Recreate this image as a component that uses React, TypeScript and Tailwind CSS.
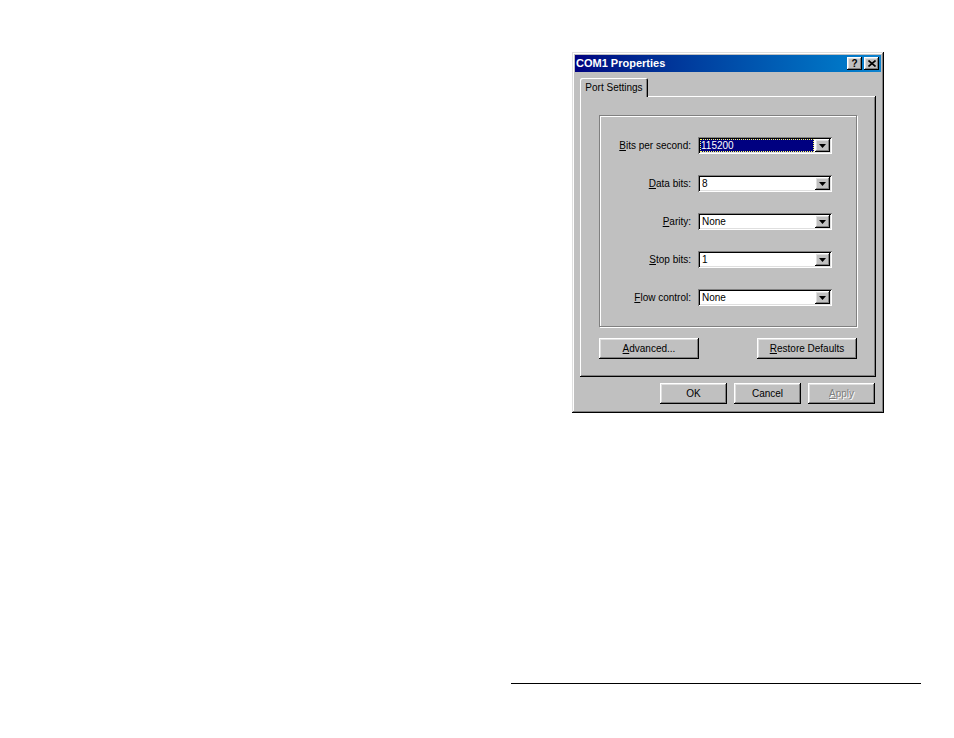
import React from 'react';

const raised =
  'shadow-[inset_-1px_-1px_0_#000,inset_1px_1px_0_#fff,inset_-2px_-2px_0_#808080,inset_2px_2px_0_#dfdfdf]';
const sunken =
  'shadow-[inset_1px_1px_0_#808080,inset_-1px_-1px_0_#fff,inset_2px_2px_0_#000,inset_-2px_-2px_0_#dfdfdf]';

const DropButton = () => (
  <div className={`flex w-[15px] items-center justify-center bg-[#c0c0c0] ${raised}`}>
    <svg width="7" height="4" viewBox="0 0 7 4">
      <polygon points="0,0 7,0 3.5,4" fill="#000" />
    </svg>
  </div>
);

interface ComboProps {
  value: string;
  focused?: boolean;
}

const Combo: React.FC<ComboProps> = ({ value, focused }) => (
  <div className={`flex h-[17px] w-[134px] bg-white p-[2px] ${sunken}`}>
    <div className="flex flex-1 items-center pr-[1px]">
      {focused ? (
        <span className="flex h-full w-full items-center bg-[#000080] pl-[1px] text-white outline-1 outline-dotted outline-[#ffff60] -outline-offset-1">
          {value}
        </span>
      ) : (
        <span className="pl-[2px] text-black">{value}</span>
      )}
    </div>
    <DropButton />
  </div>
);

interface RowProps {
  mnemonic: string;
  rest: string;
  value: string;
  focused?: boolean;
}

const Row: React.FC<RowProps> = ({ mnemonic, rest, value, focused }) => (
  <div className="flex h-[17px] items-center">
    <div className="w-[93px] pr-[2px] text-right text-black">
      <u className="underline-offset-1">{mnemonic}</u>
      {rest}
    </div>
    <div className="ml-[5px]">
      <Combo value={value} focused={focused} />
    </div>
  </div>
);

interface BtnProps {
  label: string;
  mnemonic?: string;
  width: string;
  disabled?: boolean;
}

const Btn: React.FC<BtnProps> = ({ label, mnemonic, width, disabled }) => {
  const first = mnemonic ? label.slice(0, 1) : '';
  const rest = mnemonic ? label.slice(1) : label;
  return (
    <div
      className={`flex h-[21px] items-center justify-center bg-[#c0c0c0] ${width} ${raised} ${
        disabled ? 'text-[#808080] [text-shadow:1px_1px_0_#fff]' : 'text-black'
      }`}
    >
      <span>
        {first && <u className="underline-offset-1">{first}</u>}
        {rest}
      </span>
    </div>
  );
};

export default function App() {
  return (
    <div className="min-h-[738px] w-[954px] bg-white pt-[52px] font-['Liberation_Sans',Arial,sans-serif] text-[10px]">
      <div className="ml-[572px] flex h-[361px] w-[312px] flex-col bg-[#c0c0c0] p-[3px] shadow-[inset_-1px_-1px_0_#000,inset_1px_1px_0_#dfdfdf,inset_-2px_-2px_0_#808080,inset_2px_2px_0_#fff]">
        {/* title bar */}
        <div className="flex h-[17px] items-center justify-between bg-gradient-to-r from-[#000080] to-[#1084d0] pl-[1px] pr-[2px]">
          <span className="text-[11px] font-bold text-white">COM1 Properties</span>
          <div className="flex gap-[2px]">
            <div className={`flex h-[13px] w-[15px] items-center justify-center bg-[#c0c0c0] ${raised}`}>
              <span className="text-[10px] font-bold leading-none text-black">?</span>
            </div>
            <div className={`flex h-[13px] w-[15px] items-center justify-center bg-[#c0c0c0] ${raised}`}>
              <svg width="8" height="7" viewBox="0 0 8 7">
                <path d="M0.5 0.5 L7.5 6.5 M7.5 0.5 L0.5 6.5" stroke="#000" strokeWidth="1.6" />
              </svg>
            </div>
          </div>
        </div>

        {/* tab strip */}
        <div className="ml-[5px] mt-[6px] flex">
          <div className="relative z-10 -mb-[1px] flex h-[19px] w-[68px] items-center justify-center rounded-t-[2px] bg-[#c0c0c0] pb-[1px] text-black shadow-[inset_1px_1px_0_#fff,inset_-1px_0_0_#000,inset_-2px_0_0_#808080]">
            Port Settings
          </div>
        </div>

        {/* tab panel */}
        <div className="ml-[5px] flex h-[281px] w-[296px] flex-col bg-[#c0c0c0] p-[19px] pb-[18px] shadow-[inset_-1px_-1px_0_#000,inset_1px_1px_0_#fff,inset_-2px_-2px_0_#808080]">
          <div className="flex h-[213px] w-[258px] flex-col gap-[21px] border border-[#808080] pt-[21px] shadow-[inset_1px_1px_0_#fff,1px_1px_0_#fff]">
            <Row mnemonic="B" rest="its per second:" value="115200" focused />
            <Row mnemonic="D" rest="ata bits:" value="8" />
            <Row mnemonic="P" rest="arity:" value="None" />
            <Row mnemonic="S" rest="top bits:" value="1" />
            <Row mnemonic="F" rest="low control:" value="None" />
          </div>
          <div className="mt-[11px] flex w-[258px] justify-between">
            <Btn label="Advanced..." mnemonic="A" width="w-[100px]" />
            <Btn label="Restore Defaults" mnemonic="R" width="w-[100px]" />
          </div>
        </div>

        {/* dialog buttons */}
        <div className="mt-[6px] flex justify-end gap-[7px] pr-[6px]">
          <Btn label="OK" width="w-[67px]" />
          <Btn label="Cancel" width="w-[67px]" />
          <Btn label="Apply" mnemonic="A" width="w-[67px]" disabled />
        </div>
      </div>

      <div className="ml-[511px] mt-[270px] h-[1px] w-[410px] bg-black" />
    </div>
  );
}
